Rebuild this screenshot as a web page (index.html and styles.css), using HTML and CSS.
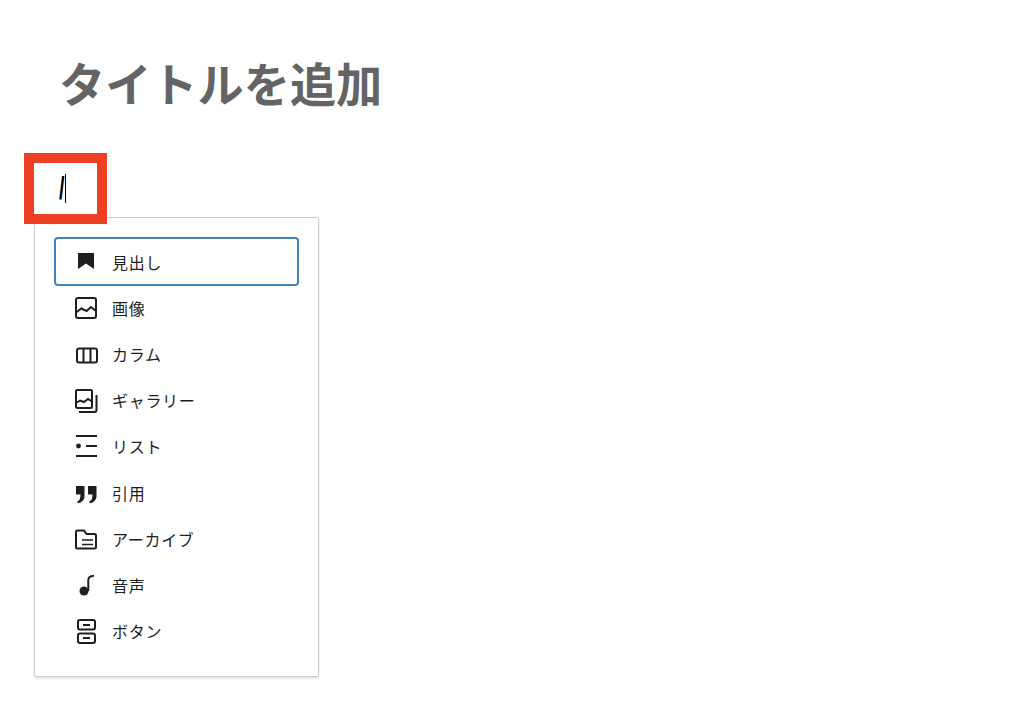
FILE: index.html
```html
<!DOCTYPE html>
<html>
<head>
    <title>タイトルを追加</title>
    <link rel="stylesheet" href="styles.css">
</head>
<body>
    <div class="editor">
        <h1 class="post-title">タイトルを追加</h1>
        <div class="slash-line"><span class="slash">/</span><span class="caret"></span></div>
        <div class="red-box"></div>
        <div class="inserter">
            <div class="item active">
                <svg class="icon" viewBox="0 0 24 24"><path d="M4 3h16v16l-8-5.600L4 19z" fill="#1e1e1e" stroke="none"/></svg>
                <span>見出し</span>
            </div>
            <div class="item">
                <svg class="icon" viewBox="0 0 24 24"><rect x="2" y="2" width="20" height="20" rx="2"/><path d="M2 16.500l5.500-4 5 2.500 4.500-4 5 4"/></svg>
                <span>画像</span>
            </div>
            <div class="item">
                <svg class="icon" viewBox="0 0 24 24"><rect x="3" y="6.500" width="20" height="14" rx="2"/><path d="M9.500 6.500v14M16.500 6.500v14"/></svg>
                <span>カラム</span>
            </div>
            <div class="item">
                <svg class="icon" viewBox="0 0 24 24"><rect x="2" y="2" width="16" height="18" rx="1.500"/><path d="M2 15l4-2.500 4 1.500 4-3 4 2.500M22.500 7v15a2 2 0 0 1-2 2H5"/></svg>
                <span>ギャラリー</span>
            </div>
            <div class="item">
                <svg class="icon" viewBox="0 0 24 24"><path d="M2 2h21M12 12h11M2 22h21"/><circle cx="4.500" cy="12" r="2.400" fill="#1e1e1e" stroke="none"/></svg>
                <span>リスト</span>
            </div>
            <div class="item">
                <svg class="icon" viewBox="0 0 24 24"><path d="M2 5h8.500v10c0 4-2.500 6.500-7 7.300v-2c2-.6 3-2.900 3-6.800H2zM14 5h8.500v10c0 4-2.500 6.500-7 7.300v-2c2-.6 3-2.900 3-6.800H14z" fill="#1e1e1e" stroke="none"/></svg>
                <span>引用</span>
            </div>
            <div class="item">
                <svg class="icon" viewBox="0 0 24 24"><path d="M2 5a1.500 1.500 0 0 1 1.500-1.500H10L12.500 7h8A1.500 1.500 0 0 1 22 8.500V20a1.500 1.500 0 0 1-1.500 1.500h-17A1.500 1.500 0 0 1 2 20z"/><path class="thin" d="M8 13h11M8 17.500h11"/></svg>
                <span>アーカイブ</span>
            </div>
            <div class="item">
                <svg class="icon" viewBox="0 0 24 24"><path d="M14.300 18V7c0-2.500 1.500-4 5.700-4.300"/><circle cx="10" cy="18" r="4.500" fill="#1e1e1e" stroke="none"/></svg>
                <span>音声</span>
            </div>
            <div class="item">
                <svg class="icon" viewBox="0 0 24 24"><rect x="4" y="1" width="17" height="9.500" rx="2"/><rect x="4" y="14.500" width="17" height="9.500" rx="2"/><path d="M9 6h7M9 19h7"/></svg>
                <span>ボタン</span>
            </div>
        </div>
    </div>
</body>
</html>
```

FILE: styles.css
```css
body {
    margin: 0;
    background: #fff;
    font-family: "Noto Sans CJK JP", "Noto Sans", sans-serif;
    color: #1e1e1e;
}
.editor {
    position: relative;
    height: 714px;
    overflow: hidden;
    padding-top: 48px;
    box-sizing: border-box;
}
.post-title {
    margin: 0 0 0 59px;
    font-size: 46.2px;
    line-height: 68px;
    font-weight: 700;
    color: #646464;
}
.slash-line {
    display: flex;
    align-items: center;
    height: 30px;
    margin: 57px 0 0 59px;
}
.slash {
    font-family: "Liberation Sans", sans-serif;
    font-size: 32px;
    font-weight: 700;
    line-height: 30px;
    color: #000;
    transform: scaleX(.62);
    transform-origin: left center;
}
.caret {
    width: 1.5px;
    height: 29px;
    margin-left: -3px;
    background: #000;
}
.red-box {
    position: absolute;
    left: 24px;
    top: 153px;
    width: 83px;
    height: 71px;
    box-sizing: border-box;
    border: 10px solid #ee4124;
    z-index: 2;
}
.inserter {
    width: 285px;
    height: 460px;
    margin: 14px 0 0 34px;
    padding: 19px 19px 0;
    box-sizing: border-box;
    background: #fff;
    border: 1px solid #ccc;
    border-radius: 2px;
    box-shadow: 0 2px 3px rgba(0,0,0,0.1);
}
.item {
    display: flex;
    align-items: center;
    height: 46.25px;
    padding: 0 0 0 20px;
    box-sizing: border-box;
    font-size: 16px;
    letter-spacing: .7px;
}
.item.active {
    height: 49px;
    margin-bottom: -1.4px;
    border: 2px solid #3d85c0;
    border-radius: 4px;
    padding-left: 18px;
}
.icon {
    width: 24px;
    height: 24px;
    margin-right: 14px;
    flex-shrink: 0;
    overflow: visible;
    fill: none;
    stroke: #1e1e1e;
    stroke-width: 2;
}
.icon .thin {
    stroke-width: 1.5;
}
```
